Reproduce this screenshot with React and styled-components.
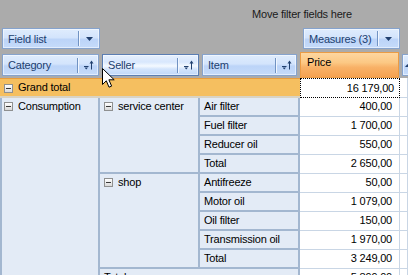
import React from 'react';
import styled, { createGlobalStyle } from 'styled-components';

const GlobalStyle = createGlobalStyle`
  html, body {
    margin: 0;
    padding: 0;
    overflow: hidden;
  }
  body {
    background: #ababab;
    font-family: 'Liberation Sans', Arial, sans-serif;
    font-size: 11px;
    letter-spacing: -0.2px;
    color: #000;
  }
`;

const COLUMNS = '100px 100px 100px 100px 1fr';
const INK = '#21406f';
const LINE = '#a3b7d0';
const SOFT_LINE = '#c9d6e5';

const buttonGradient =
  'linear-gradient(to bottom, #dfecfd 0%, #d3e4fc 45%, #bcd4f8 55%, #c5dbfa 100%)';
const hoverGradient =
  'linear-gradient(to bottom, #e6f0fe 0%, #d8e7fd 35%, #f4f9ff 55%, #d3e4fc 70%, #c0d8fa 100%)';

const Page = styled.div`
  position: relative;
  width: 408px;
  height: 275px;
  overflow: hidden;
`;

const FilterArea = styled.div`
  height: 27px;
  display: flex;
  align-items: center;
  justify-content: center;
  padding-left: 196px;
  color: #1a1a1a;
`;

const ButtonRow = styled.div`
  display: flex;
  justify-content: space-between;
  align-items: center;
  height: 21px;
  margin-top: 1px;
  padding: 0 8px 0 2px;
`;

const HeaderRow = styled.div`
  display: grid;
  grid-template-columns: ${COLUMNS};
  height: 26px;
  margin-top: 3px;
  align-items: center;
`;

const FieldButton = styled.div`
  box-sizing: border-box;
  display: flex;
  align-items: center;
  width: ${p => p.$width || 97}px;
  height: ${p => p.$height || 22}px;
  margin-left: ${p => p.$inset || 0}px;
  border: 1px solid ${p => (p.$hover ? '#5b7eb3' : '#86a3cd')};
  background: ${p => (p.$hover ? hoverGradient : buttonGradient)};
  box-shadow: inset 0 0 0 1px rgba(255, 255, 255, 0.5);
  color: ${INK};
  white-space: nowrap;
  overflow: hidden;
`;

const ButtonLabel = styled.span`
  flex: 1;
  padding-left: 5px;
`;

const ButtonDivider = styled.span`
  width: 1px;
  height: 15px;
  background: #7193c3;
  box-shadow: 1px 0 0 #f0f6ff;
`;

const IconBox = styled.span`
  width: ${p => p.$width || 20}px;
  display: flex;
  align-items: center;
  justify-content: center;
`;

const PriceHeader = styled.div`
  box-sizing: border-box;
  align-self: stretch;
  width: 99px;
  padding: 3px 0 0 6px;
  border: 1px solid #eb9c45;
  background: linear-gradient(to bottom, #fed7a0 0%, #fcc884 40%, #f8b167 60%, #f5a251 100%);
  line-height: 13px;
`;

const PivotGrid = styled.div`
  display: grid;
  grid-template-columns: ${COLUMNS};
  grid-template-rows: 20px repeat(10, 19px);
`;

const Cell = styled.div`
  box-sizing: border-box;
  grid-column: ${p => p.$col} / span ${p => p.$colSpan || 1};
  grid-row: ${p => p.$row} / span ${p => p.$rowSpan || 1};
  line-height: 13px;
  white-space: nowrap;
  overflow: hidden;
`;

const TotalHeader = styled(Cell)`
  display: flex;
  align-items: center;
  align-self: stretch;
  gap: 5px;
  padding: 0 0 1px 4px;
  background: #f5bf60;
  border-top: 1px solid #e99d3c;
  border-bottom: 2px solid #d9d3c4;
`;

const RowHeader = styled(Cell)`
  display: flex;
  align-items: flex-start;
  gap: 5px;
  padding: 2px 4px 0 ${p => (p.$first ? 2 : 4)}px;
  background: #e3ebf6;
  border-left: ${p => (p.$first ? `2px solid ${LINE}` : 'none')};
  border-right: 2px solid ${LINE};
  border-bottom: ${p => (p.$open ? 'none' : `2px solid ${LINE}`)};
`;

const ValueCell = styled(Cell)`
  padding: 2px 7px 0 0;
  text-align: right;
  background: #fff;
  border-right: 1px solid ${SOFT_LINE};
  border-bottom: 1px solid ${SOFT_LINE};
`;

const FocusCell = styled(Cell)`
  padding: 3px 5px 0 0;
  text-align: right;
  background: #fff;
  border: 1px dotted #000;
`;

const Toggle = styled.span`
  position: relative;
  flex: none;
  box-sizing: border-box;
  width: 9px;
  height: 9px;
  margin-top: ${p => p.$offset || 2}px;
  border: 1px solid #8f9090;
  background: linear-gradient(to bottom, #ffffff, #d9d9d9);

  &::after {
    content: '';
    position: absolute;
    left: 1px;
    right: 1px;
    top: 3px;
    height: 1px;
    background: #3a3a3a;
  }
`;

const Cursor = styled.svg`
  position: absolute;
  left: 102px;
  top: 68px;
`;

const SortIcon = () => (
  <svg width="11" height="10" viewBox="0 0 11 10">
    <path d="M1 6.5h4.5" stroke={INK} strokeWidth="1" />
    <path d="M1.5 7.5h3.5L3.25 9.5z" fill={INK} />
    <path d="M8.5 9.5V2" stroke={INK} strokeWidth="1" />
    <path d="M6.5 3.5L8.5 0.5l2 3z" fill={INK} />
  </svg>
);

const DropArrow = () => (
  <svg width="7" height="4" viewBox="0 0 7 4">
    <path d="M0 0h7L3.5 4z" fill={INK} />
  </svg>
);

const FieldHeader = ({ label, hover, width, inset }) => (
  <FieldButton $hover={hover} $width={width} $inset={inset}>
    <ButtonLabel>{label}</ButtonLabel>
    <ButtonDivider />
    <IconBox>
      <SortIcon />
    </IconBox>
  </FieldButton>
);

const groups = [
  {
    seller: 'service center',
    items: [
      ['Air filter', '400,00'],
      ['Fuel filter', '1 700,00'],
      ['Reducer oil', '550,00'],
      ['Total', '2 650,00']
    ]
  },
  {
    seller: 'shop',
    items: [
      ['Antifreeze', '50,00'],
      ['Motor oil', '1 079,00'],
      ['Oil filter', '150,00'],
      ['Transmission oil', '1 970,00'],
      ['Total', '3 249,00']
    ]
  }
];

const App = () => {
  let row = 2;
  const cells = [];

  groups.forEach(group => {
    cells.push(
      <RowHeader key={group.seller} $col={2} $row={row} $rowSpan={group.items.length}>
        <Toggle />
        {group.seller}
      </RowHeader>
    );
    group.items.forEach(([item, value]) => {
      cells.push(
        <RowHeader key={`${group.seller}-${item}`} $col={3} $row={row}>
          {item}
        </RowHeader>,
        <ValueCell key={`${group.seller}-${item}-v`} $col={4} $row={row}>
          {value}
        </ValueCell>,
        <ValueCell key={`${group.seller}-${item}-x`} $col={5} $row={row} />
      );
      row += 1;
    });
  });

  return (
    <Page>
      <GlobalStyle />
      <FilterArea>Move filter fields here</FilterArea>

      <ButtonRow>
        <FieldButton $width={98} $height={21}>
          <ButtonLabel>Field list</ButtonLabel>
          <ButtonDivider />
          <IconBox>
            <DropArrow />
          </IconBox>
        </FieldButton>
        <FieldButton $width={97} $height={21}>
          <ButtonLabel>Measures (3)</ButtonLabel>
          <ButtonDivider />
          <IconBox $width={21}>
            <DropArrow />
          </IconBox>
        </FieldButton>
      </ButtonRow>

      <HeaderRow>
        <FieldHeader label="Category" inset={2} />
        <FieldHeader label="Seller" inset={2} hover />
        <FieldHeader label="Item" inset={2} width={95} />
        <PriceHeader>Price</PriceHeader>
        <FieldButton $inset={2} $width={60}>
          <IconBox $width={8}>
            <svg width="5" height="5" viewBox="0 0 5 5">
              <path d="M0 4L2.5 1 5 4z" fill={INK} />
            </svg>
          </IconBox>
        </FieldButton>
      </HeaderRow>

      <PivotGrid>
        <TotalHeader $col={1} $row={1} $colSpan={3}>
          <Toggle $offset={0} />
          Grand total
        </TotalHeader>
        <FocusCell $col={4} $row={1}>16 179,00</FocusCell>
        <ValueCell $col={5} $row={1} />

        <RowHeader $col={1} $row={2} $rowSpan={10} $first $open>
          <Toggle />
          Consumption
        </RowHeader>
        {cells}
        <RowHeader $col={2} $row={row} $colSpan={2}>
          Total
        </RowHeader>
        <ValueCell $col={4} $row={row}>5 899,00</ValueCell>
        <ValueCell $col={5} $row={row} />
      </PivotGrid>

      <Cursor width="13" height="21" viewBox="0 0 13 21">
        <path
          d="M0.5 0.5V16.5L4.3 12.8L7 19.2L9.6 18.1L6.9 11.8H12.2Z"
          fill="#fff"
          stroke="#000"
          strokeWidth="1"
          strokeLinejoin="round"
        />
      </Cursor>
    </Page>
  );
};

export default App;
